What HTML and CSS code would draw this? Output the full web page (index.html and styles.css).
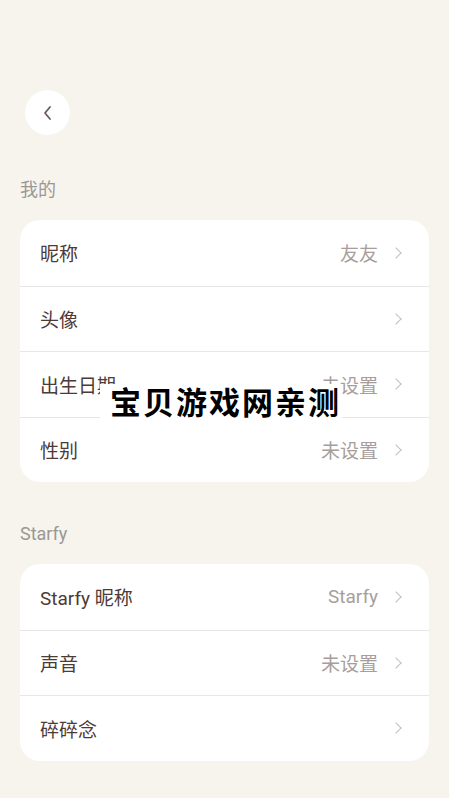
FILE: index.html
```html
<!DOCTYPE html>
<html>
    <head>
        <title>我的</title>
        <meta charset="utf-8">
        <meta name="viewport" content="width=device-width, initial-scale=1.0">
        <link rel="stylesheet" href="styles.css">
    </head>
    <body>
      <div class="page">
            <div class="back">
                  <svg width="14" height="16" viewBox="0 0 14 16"><path d="M9 2 L4 8 L9 14" fill="none" stroke="#6e5a57" stroke-width="1.8" stroke-linecap="round" stroke-linejoin="round"/></svg>
            </div>

            <p class="section">我的</p>
            <div class="card">
                  <div class="row"><span class="name">昵称</span><span class="value">友友</span><i class="chev"></i></div>
                  <div class="row"><span class="name">头像</span><span class="value"></span><i class="chev"></i></div>
                  <div class="row"><span class="name">出生日期</span><span class="value">未设置</span><i class="chev"></i></div>
                  <div class="row"><span class="name">性别</span><span class="value">未设置</span><i class="chev"></i></div>
            </div>

            <p class="section section-2">Starfy</p>
            <div class="card">
                  <div class="row"><span class="name">Starfy 昵称</span><span class="value">Starfy</span><i class="chev"></i></div>
                  <div class="row"><span class="name">声音</span><span class="value">未设置</span><i class="chev"></i></div>
                  <div class="row"><span class="name">碎碎念</span><span class="value"></span><i class="chev"></i></div>
            </div>
      </div>
      <div class="mark">宝贝游戏网亲测</div>
    </body>
</html>
```

FILE: styles.css
```css
body{
      margin: 0;
      background: #f7f4ee;
      font-family: Roboto, "Noto Sans CJK SC", sans-serif;
}
.page{
      padding: 90px 20px 0;
}
.back{
      width: 45px;
      height: 45px;
      margin-left: 5px;
      border-radius: 50%;
      background: #fff;
      display: flex;
      align-items: center;
      justify-content: center;
}
.section{
      margin: 43px 0 18px;
      font-size: 18px;
      line-height: 24px;
      color: #9b9794;
}
.section-2{margin-top: 40px;}
.card{
      background: #fff;
      border-radius: 20px;
      overflow: hidden;
}
.row{
      box-sizing: border-box;
      height: 65.5px;
      display: flex;
      align-items: center;
      padding: 0 27px 0 20px;
      border-top: 1px solid #e9e7e6;
}
.row:first-child{border-top: none;}
.name{
      flex: 1;
      font-size: 19px;
      color: #4e3a37;
}
.value{
      font-size: 19px;
      color: #a79e9c;
      margin-right: 14px;
}
.chev{
      width: 7px;
      height: 7px;
      border-top: 1.6px solid #c4bdbb;
      border-right: 1.6px solid #c4bdbb;
      transform: rotate(45deg);
      margin-right: 2px;
}
.mark{
      position: absolute;
      left: 100px;
      top: 384px;
      width: 232px;
      height: 34px;
      padding-left: 10px;
      background: #fff;
      color: #000;
      font-family: "Noto Sans CJK SC", sans-serif;
      font-weight: bold;
      font-size: 31px;
      line-height: 34px;
      letter-spacing: 2px;
      white-space: nowrap;
}
```
